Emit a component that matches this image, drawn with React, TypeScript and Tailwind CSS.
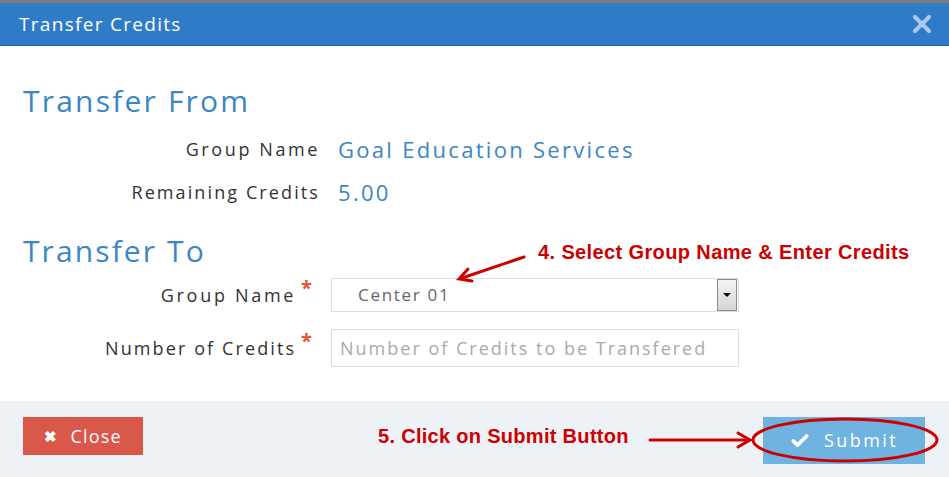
import { X, Check } from 'lucide-react'

// 필드 라벨 + 값 한 줄
function InfoRow({ label, value, tracking }: { label: string; value: string; tracking: string }) {
  return (
    <div className="flex h-[30px] items-center">
      <div className={`w-[320px] shrink-0 text-right text-[18px] text-[#333] ${tracking}`}>{label}</div>
      <div className="ml-[18px] text-[22px] tracking-[2.3px] text-[#3a86c6]">{value}</div>
    </div>
  )
}

function FieldLabel({ label, tracking }: { label: string; tracking: string }) {
  return (
    <div className="flex w-[312px] shrink-0 items-start justify-end">
      <span className={`text-[18px] text-[#333] ${tracking}`}>{label}</span>
      <span className="ml-[5px] -mt-[4px] text-[20px] font-bold leading-none text-[#e0533a]">*</span>
    </div>
  )
}

export default function App() {
  return (
    <div className="relative h-[477px] w-[949px] overflow-hidden bg-white font-['Open_Sans',sans-serif]">
      <header className="flex h-[46px] items-center justify-between border-t-[3px] border-b border-t-[#7b7b7b] border-b-[#2566a8] bg-[#2f7bc8] pl-[19px] pr-[13px]">
        <h1 className="text-[19px] tracking-[1.3px] text-white">Transfer Credits</h1>
        <X className="h-[28px] w-[28px] text-[#a9c9ec]" strokeWidth={3.5} />
      </header>

      <main className="h-[355px] px-[23px] pt-[38px]">
        <h2 className="text-[30px] leading-[34px] tracking-[2.2px] text-[#3a86c6]">Transfer From</h2>
        <div className="-ml-[23px] mt-[16px] flex flex-col gap-[13px]">
          <InfoRow label="Group Name" value="Goal Education Services" tracking="tracking-[2.6px]" />
          <InfoRow label="Remaining Credits" value="5.00" tracking="tracking-[2.1px]" />
        </div>

        <h2 className="mt-[27px] text-[30px] leading-[34px] tracking-[2.1px] text-[#3a86c6]">Transfer To</h2>
        <div className="-ml-[23px] mt-[10px] flex flex-col gap-[17px]">
          <div className="flex items-center">
            <FieldLabel label="Group Name" tracking="tracking-[2.7px]" />
            <div className="ml-[19px] flex h-[34px] w-[408px] items-center justify-between border border-[#ddd] pl-[26px] pr-[1px]">
              <span className="text-[17px] tracking-[1.7px] text-[#666]">Center 01</span>
              <div className="flex h-[32px] w-[20px] items-center justify-center border border-[#8a8a8a] bg-gradient-to-b from-[#f4f4f4] to-[#d6d6d6]">
                <span className="h-0 w-0 border-x-[4px] border-t-[4px] border-x-transparent border-t-black" />
              </div>
            </div>
          </div>
          <div className="flex items-center">
            <FieldLabel label="Number of Credits" tracking="tracking-[2.1px]" />
            <input
              className="ml-[19px] h-[38px] w-[408px] border border-[#ddd] px-[8px] text-[18px] tracking-[2px] text-[#666] outline-none placeholder:text-[#aaa]"
              placeholder="Number of Credits to be Transfered"
            />
          </div>
        </div>
      </main>

      <footer className="flex h-[76px] items-start justify-between bg-[#eef1f6] pl-[23px] pr-[24px] pt-[16px]">
        <button className="flex h-[38px] w-[120px] items-center justify-center gap-[12px] bg-[#d9584a] text-[18px] tracking-[1.2px] text-white">
          <span className="text-[15px] font-bold">✖</span>
          Close
        </button>
        <button className="flex h-[47px] w-[162px] items-center justify-center gap-[14px] bg-[#6fb3e0] text-[18px] tracking-[2.4px] text-white">
          <Check className="h-[20px] w-[20px]" strokeWidth={4.5} />
          Submit
        </button>
      </footer>

      {/* 안내 주석 */}
      <div className="absolute left-[538px] top-[237px] font-['Liberation_Sans',sans-serif] text-[20px] font-bold tracking-[0.38px] text-[#cc0000]">
        4. Select Group Name &amp; Enter Credits
      </div>
      <div className="absolute left-[378px] top-[421px] font-['Liberation_Sans',sans-serif] text-[20px] font-bold tracking-[0.3px] text-[#cc0000]">
        5. Click on Submit Button
      </div>
      <svg className="pointer-events-none absolute left-0 top-0" width="949" height="477">
        <g stroke="#cc0000" strokeWidth="3" fill="none" strokeLinecap="round">
          <line x1="524" y1="257" x2="462" y2="278" />
          <polyline points="468,269 459,279 472,281" />
          <line x1="650" y1="440" x2="748" y2="440" />
          <polyline points="738,433 750,440 738,447" />
          <ellipse cx="845" cy="440" rx="92" ry="21" />
        </g>
      </svg>
    </div>
  )
}
